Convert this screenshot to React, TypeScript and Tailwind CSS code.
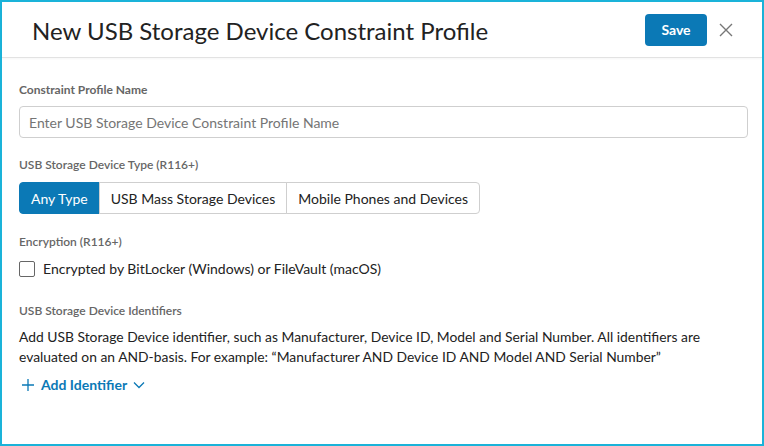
import React, { useState } from "react";

const types = ["Any Type", "USB Mass Storage Devices", "Mobile Phones and Devices"];

const Label = ({ children, bold }: { children: React.ReactNode; bold?: boolean }) => (
	<div className={`text-[12px] leading-4 text-[#666] ${bold ? "font-bold" : "font-semibold"}`}>
		{children}
	</div>
);

export default function App() {
	const [selected, setSelected] = useState(0);
	const [encrypted, setEncrypted] = useState(false);

	return (
		<div
			className="w-[764px] h-[446px] bg-white border-2 border-[#1ab3d9] text-[#222] flex flex-col"
			style={{ fontFamily: "Lato, 'Open Sans', sans-serif" }}
		>
			{/* header */}
			<div className="h-[56px] shrink-0 flex items-center pl-[30px] pr-[28px] border-b border-[#e2e2e2] shadow-[0_1px_2px_rgba(0,0,0,0.04)]">
				<h1 className="flex-1 text-[24px] leading-8 text-[#222] pt-[2px]">
					New USB Storage Device Constraint Profile
				</h1>
				<button className="h-8 w-[62px] rounded bg-[#0b79b6] text-white text-[14px] font-bold">
					Save
				</button>
				<button className="ml-[11px] w-4 h-4 flex items-center justify-center text-[#777]">
					<svg width="14" height="14" viewBox="0 0 14 14" fill="none" stroke="currentColor" strokeWidth="1.4">
						<path d="M1 1L13 13M13 1L1 13" />
					</svg>
				</button>
			</div>

			{/* body */}
			<div className="flex-1 pl-[17px] pr-[14px] pt-[24px] flex flex-col">
				<Label bold>Constraint Profile Name</Label>
				<input
					className="mt-[8px] h-8 w-full rounded border border-[#cfcfcf] px-[9px] text-[14px] placeholder:text-[#757575] outline-none"
					placeholder="Enter USB Storage Device Constraint Profile Name"
				/>

				<div className="mt-[19px]">
					<Label>USB Storage Device Type (R116+)</Label>
				</div>
				<div className="mt-[9px] flex">
					{types.map((t, i) => (
						<button
							key={t}
							onClick={() => setSelected(i)}
							className={`h-8 px-[11px] text-[14px] border ${
								i === selected
									? "bg-[#0b79b6] border-[#0b79b6] text-white"
									: "bg-white border-[#cfcfcf] text-[#222]"
							} ${i === 0 ? "rounded-l" : ""} ${i === types.length - 1 ? "rounded-r" : ""} ${
								i > 0 ? "-ml-px" : ""
							}`}
						>
							{t}
						</button>
					))}
				</div>

				<div className="mt-[20px]">
					<Label>Encryption (R116+)</Label>
				</div>
				<label className="mt-[9px] flex items-center gap-2 text-[14px] leading-5 cursor-pointer">
					<span
						onClick={() => setEncrypted(!encrypted)}
						className={`w-4 h-4 rounded-[2px] border ${
							encrypted ? "bg-[#0b79b6] border-[#0b79b6]" : "border-[#666] bg-white"
						}`}
					/>
					Encrypted by BitLocker (Windows) or FileVault (macOS)
				</label>

				<div className="mt-[24px]">
					<Label>USB Storage Device Identifiers</Label>
				</div>
				<p className="mt-[8px] text-[13.85px] leading-5 pr-8">
					Add USB Storage Device identifier, such as Manufacturer, Device ID, Model and Serial Number. All identifiers are
					evaluated on an AND-basis. For example: “Manufacturer AND Device ID AND Model AND Serial Number”
				</p>
				<button className="mt-[7px] self-start flex items-center text-[#0b79b6] text-[14px] font-bold">
					<svg width="14" height="14" viewBox="0 0 14 14" fill="none" stroke="currentColor" strokeWidth="1.3" className="ml-[2px]">
						<path d="M7 1V13M1 7H13" />
					</svg>
					<span className="ml-[6px]">Add Identifier</span>
					<svg width="12" height="8" viewBox="0 0 12 8" fill="none" stroke="currentColor" strokeWidth="1.3" className="ml-[6px]">
						<path d="M1 1.5L6 6.5L11 1.5" />
					</svg>
				</button>
			</div>
		</div>
	);
}
